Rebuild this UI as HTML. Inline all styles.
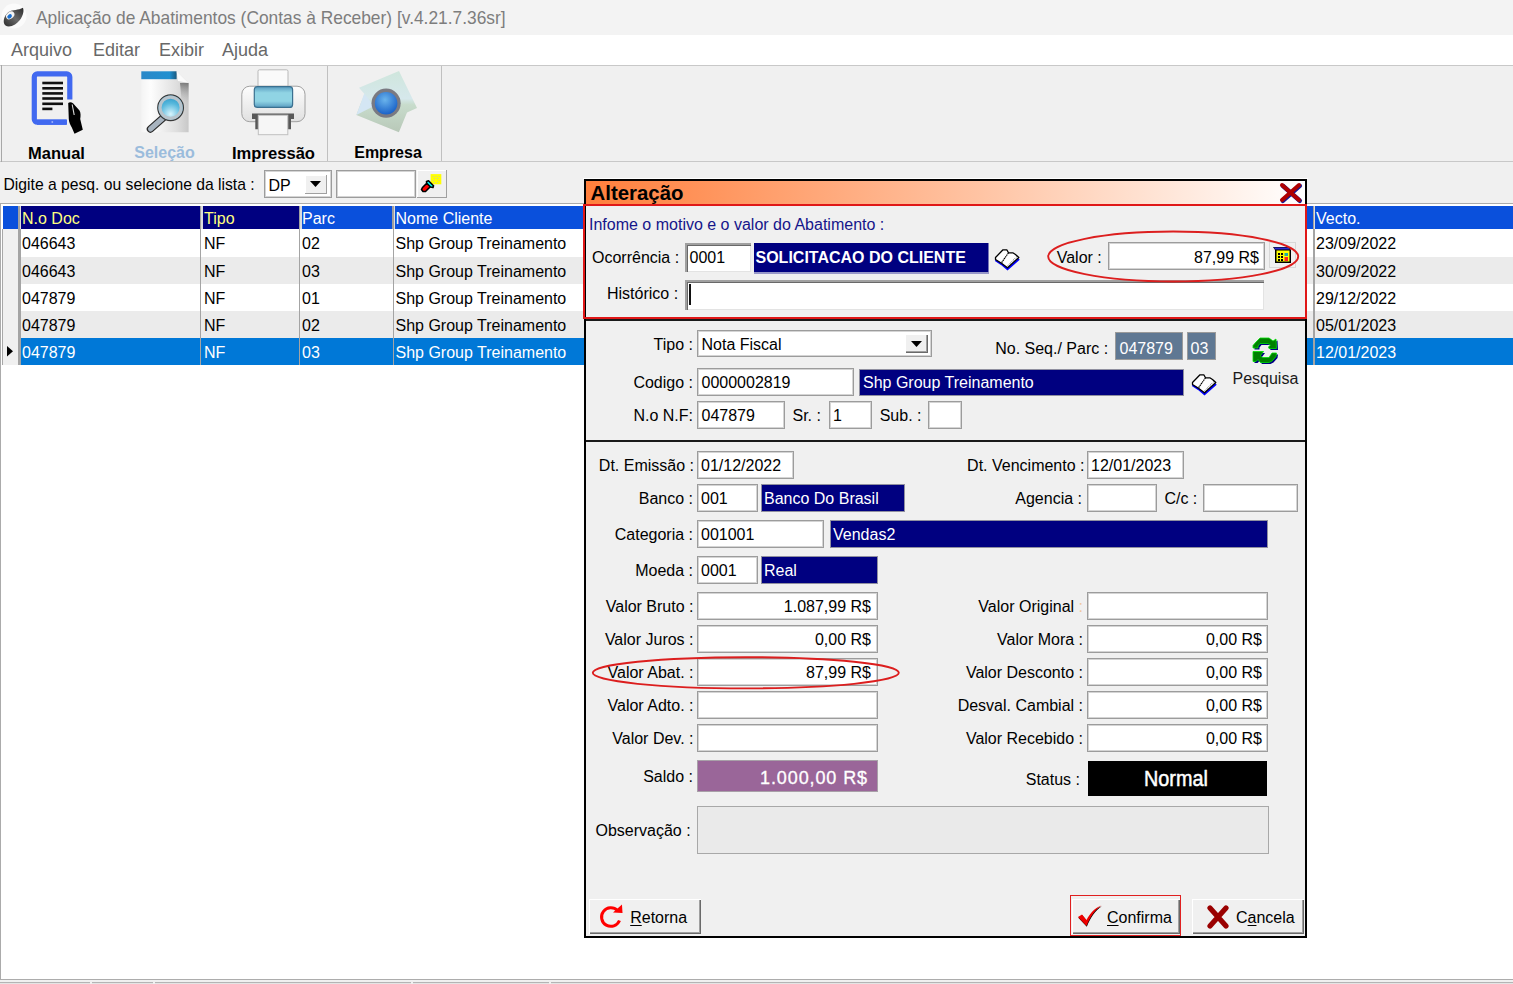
<!DOCTYPE html>
<html><head><meta charset="utf-8">
<style>
html,body{margin:0;padding:0;}
body{width:1513px;height:984px;position:relative;overflow:hidden;background:#f0f0f0;font-family:"Liberation Sans",sans-serif;}
.t{position:absolute;white-space:nowrap;}
.b{position:absolute;box-sizing:border-box;}
svg{position:absolute;overflow:visible;}
</style></head><body>
<div class="b" style="left:0px;top:0px;width:1513px;height:35px;background:#f3f3f3;"></div>
<svg style="left:0;top:0" width="32" height="32" viewBox="0 0 32 32"><defs><linearGradient id="ag" x1="0" y1="1" x2="1" y2="0"><stop offset="0" stop-color="#2a2a2a"/><stop offset="0.5" stop-color="#6a6a6a"/><stop offset="1" stop-color="#2a2a2a"/></linearGradient></defs><circle cx="14" cy="16" r="12.5" fill="#fbfbfb"/><path d="M23 7.8 C24.8 12.5 21.5 20.5 15 24.5 C10 27.5 4.5 27 3.8 22.5 C3.4 18.5 5.5 14.5 8.5 12 C12.5 9.5 18.5 10.5 23 7.8 Z" fill="url(#ag)"/><ellipse cx="10.2" cy="15.3" rx="4.6" ry="3.3" transform="rotate(-38 10.2 15.3)" fill="#f4f4f4"/><ellipse cx="9.6" cy="16.4" rx="2.5" ry="1.9" transform="rotate(-38 9.6 16.4)" fill="#1a6fcf"/></svg>
<div class="t" style="top:7.04px;font-size:18.4px;line-height:21.16px;color:#7d7d7d;font-weight:normal;font-family:&quot;Liberation Sans&quot;,sans-serif;left:36px;transform:scaleX(0.944);transform-origin:0 0;">Aplicação de Abatimentos (Contas à Receber) [v.4.21.7.36sr]</div>
<div class="b" style="left:0px;top:35px;width:1513px;height:30px;background:#ffffff;"></div>
<div class="t" style="top:40.41px;font-size:18px;line-height:20.70px;color:#686868;font-weight:normal;font-family:&quot;Liberation Sans&quot;,sans-serif;left:11px;">Arquivo</div>
<div class="t" style="top:40.41px;font-size:18px;line-height:20.70px;color:#686868;font-weight:normal;font-family:&quot;Liberation Sans&quot;,sans-serif;left:93px;">Editar</div>
<div class="t" style="top:40.41px;font-size:18px;line-height:20.70px;color:#686868;font-weight:normal;font-family:&quot;Liberation Sans&quot;,sans-serif;left:159px;">Exibir</div>
<div class="t" style="top:40.41px;font-size:18px;line-height:20.70px;color:#686868;font-weight:normal;font-family:&quot;Liberation Sans&quot;,sans-serif;left:222px;">Ajuda</div>
<div class="b" style="left:0px;top:65px;width:1513px;height:97px;background:#f0f0f0;border-top:1px solid #c8c8c8;border-bottom:1px solid #c8c8c8;"></div>
<div class="b" style="left:1px;top:65px;width:1px;height:97px;background:#a8a8a8;"></div>
<div class="b" style="left:327px;top:66px;width:1px;height:95px;background:#c0c0c0;"></div>
<div class="b" style="left:441px;top:66px;width:1px;height:95px;background:#c0c0c0;"></div>
<div class="t" style="top:143.80px;font-size:16.5px;line-height:18.97px;color:#000;font-weight:bold;font-family:&quot;Liberation Sans&quot;,sans-serif;left:56.5px;transform:translateX(-50%);">Manual</div>
<div class="t" style="top:144.26px;font-size:16px;line-height:18.40px;color:#9bbcdc;font-weight:bold;font-family:&quot;Liberation Sans&quot;,sans-serif;left:164.5px;transform:translateX(-50%);">Seleção</div>
<div class="t" style="top:143.70px;font-size:16.6px;line-height:19.09px;color:#000;font-weight:bold;font-family:&quot;Liberation Sans&quot;,sans-serif;left:273.5px;transform:translateX(-50%);">Impressão</div>
<div class="t" style="top:144.26px;font-size:16px;line-height:18.40px;color:#000;font-weight:bold;font-family:&quot;Liberation Sans&quot;,sans-serif;left:388px;transform:translateX(-50%);">Empresa</div>
<svg style="left:25px;top:66px" width="70" height="74" viewBox="0 0 70 74"><rect x="9.3" y="7.9" width="35.5" height="48.3" rx="3" fill="none" stroke="#4169f0" stroke-width="5.2"/><rect x="42" y="33.5" width="10" height="26" fill="#f0f0f0"/><rect x="17.3" y="15.7" width="20.7" height="2.6" fill="#111"/><rect x="17.3" y="21" width="20.7" height="2.6" fill="#111"/><rect x="17.3" y="26.1" width="20.7" height="2.6" fill="#111"/><rect x="17.3" y="31.2" width="20.7" height="2.6" fill="#111"/><rect x="17.3" y="36.5" width="20.7" height="2.6" fill="#111"/><rect x="17.3" y="41.6" width="10.1" height="2.6" fill="#111"/><rect x="12" y="53.6" width="29.2" height="5.2" fill="#4169f0"/><rect x="26.5" y="55.2" width="1.6" height="1.6" fill="#a8b8f8"/><path d="M43.2 37 C44.5 35.8 46.5 36 48 37.3 L54.5 44.5 C55.8 46.5 55.8 50 55.2 53 L57.8 63.8 L49.5 67.8 L46.8 61.5 C45 58 44 56.5 43.8 53 Z" fill="#000"/><path d="M47.2 38.5 L49.2 49" stroke="#d8d8d8" stroke-width="1.1"/></svg>
<svg style="left:130px;top:66px" width="70" height="74" viewBox="0 0 70 74"><defs><linearGradient id="dg" x1="0" y1="0" x2="1" y2="0"><stop offset="0" stop-color="#f4f4f4"/><stop offset="0.2" stop-color="#fdfdfd"/><stop offset="0.75" stop-color="#dedede"/><stop offset="1" stop-color="#c8c8c8"/></linearGradient><linearGradient id="sh" x1="0" y1="0" x2="0" y2="1"><stop offset="0" stop-color="#444"/><stop offset="1" stop-color="#d0d0d0" stop-opacity="0"/></linearGradient><linearGradient id="bb" x1="0" y1="0" x2="1" y2="0"><stop offset="0" stop-color="#2a88c8"/><stop offset="0.8" stop-color="#2090d0"/><stop offset="1" stop-color="#1a5a80"/></linearGradient><radialGradient id="lg" cx="0.5" cy="0.75" r="0.7"><stop offset="0" stop-color="#d8f4fc"/><stop offset="0.6" stop-color="#58b8dc"/><stop offset="1" stop-color="#2a98c8"/></radialGradient></defs><path d="M11.3 5.3 L46.6 5.3 L58.6 17 L58.6 66.2 L11.3 66.2 Z" fill="url(#dg)"/><path d="M50 17 L58.6 17 L58.6 40 L52 40 Z" fill="url(#sh)" opacity="0.6"/><rect x="11.3" y="5.3" width="35.3" height="7.9" fill="url(#bb)"/><path d="M46.6 5.3 L58.6 17 L48 15 Z" fill="#fafafa"/><path d="M33 52 L20.5 63" stroke="#2a2a2a" stroke-width="7.5" stroke-linecap="round"/><path d="M33 52 L20.5 63" stroke="#a8b4c0" stroke-width="5" stroke-linecap="round"/><circle cx="40.6" cy="41.7" r="12.8" fill="url(#lg)" stroke="#3a3a3a" stroke-width="1.3"/><circle cx="40.6" cy="41.7" r="10.6" fill="none" stroke="#b8c4cc" stroke-width="3.2"/></svg>
<svg style="left:235px;top:66px" width="75" height="74" viewBox="0 0 75 74"><defs><linearGradient id="pb" x1="0" y1="0" x2="0" y2="1"><stop offset="0" stop-color="#fdfdfd"/><stop offset="1" stop-color="#e0e0e0"/></linearGradient><linearGradient id="pl" x1="0" y1="0" x2="0" y2="1"><stop offset="0" stop-color="#5a9cc0"/><stop offset="0.3" stop-color="#90d4e4"/><stop offset="0.7" stop-color="#90d4e4"/><stop offset="1" stop-color="#5a9cc0"/></linearGradient></defs><rect x="23" y="3.8" width="30" height="17" rx="1.5" fill="#fafafa" stroke="#b8b8b8" stroke-width="1"/><rect x="6.8" y="20.2" width="63.2" height="35.5" rx="8" fill="url(#pb)" stroke="#a0a0a0" stroke-width="1"/><rect x="19.3" y="20.6" width="38.3" height="20.8" rx="3" fill="url(#pl)" stroke="#3a7090" stroke-width="1.2"/><path d="M17 47.4 L59 47.4 L59 53 L56 53 L56 63.2 L20.3 63.2 L20.3 53 L17 53 Z" fill="#585858"/><rect x="23.3" y="49.2" width="29.5" height="19.5" fill="#f6f6f6" stroke="#c0c0c0" stroke-width="1"/></svg>
<svg style="left:350px;top:66px" width="75" height="74" viewBox="0 0 75 74"><defs><linearGradient id="eg" x1="0" y1="0" x2="0" y2="1"><stop offset="0" stop-color="#cfe6dc"/><stop offset="0.45" stop-color="#d6e8ec"/><stop offset="0.55" stop-color="#c8dccc"/><stop offset="1" stop-color="#b8c8b8"/></linearGradient><radialGradient id="bg2" cx="0.45" cy="0.35" r="0.65"><stop offset="0" stop-color="#6ab4ec"/><stop offset="1" stop-color="#1a62c8"/></radialGradient></defs><path d="M9 21.8 L49 4.9 L67 42 L57 46.6 L48.9 66.2 L6.4 48.9 L14.3 27.8 Z" fill="url(#eg)"/><path d="M14.3 27.8 L6.4 48.9 L24 40 Z" fill="#d4e6f4"/><circle cx="36.1" cy="37.2" r="14.6" fill="#7a7a82"/><circle cx="36.1" cy="37.2" r="11.3" fill="url(#bg2)"/></svg>
<div class="t" style="top:176.03px;font-size:15.7px;line-height:18.05px;color:#000;font-weight:normal;font-family:&quot;Liberation Sans&quot;,sans-serif;left:3.5px;">Digite a pesq. ou selecione da lista :</div>
<div class="b" style="left:264px;top:170px;width:68px;height:28px;background:#fff;box-shadow:inset 0 0 0 1px #9c9c9c, inset 0 0 0 2px #d4d4d4;"></div>
<div class="t" style="top:176.76px;font-size:16px;line-height:18.40px;color:#000;font-weight:normal;font-family:&quot;Liberation Sans&quot;,sans-serif;left:268.5px;">DP</div>
<div class="b" style="left:305px;top:175px;width:22px;height:19px;background:#f0f0f0;box-shadow:inset -1px -1px 0 #a0a0a0, inset 1px 1px 0 #fff;"></div>
<svg style="left:310px;top:181px" width="12" height="7"><path d="M0 0 L11 0 L5.5 6 Z" fill="#000"/></svg>
<div class="b" style="left:336px;top:170px;width:80px;height:28px;background:#fff;box-shadow:inset 0 0 0 1px #9c9c9c, inset 0 0 0 2px #d4d4d4;"></div>
<div class="b" style="left:417px;top:170px;width:30px;height:28px;background:#f0f0f0;box-shadow:inset -1px -1px 0 #a0a0a0, inset 1px 1px 0 #fff;"></div>
<svg style="left:414px;top:166px" width="36" height="34" viewBox="0 0 36 34"><rect x="16.6" y="8.1" width="10.7" height="10.2" fill="#ffff00"/><g fill="#c8c8a0"><rect x="18.5" y="10" width="1" height="1"/><rect x="21.5" y="10" width="1" height="1"/><rect x="24.5" y="10" width="1" height="1"/><rect x="20" y="12" width="1" height="1"/><rect x="23" y="12" width="1" height="1"/><rect x="18.5" y="14" width="1" height="1"/><rect x="24.5" y="14" width="1" height="1"/><rect x="20" y="16" width="1" height="1"/><rect x="23" y="16" width="1" height="1"/></g><path d="M7.5 23.5 L9 25.5 L11.5 25.5 L16.5 20.5 L13 17 L8.5 21.5 Z" fill="#ff0000" stroke="#000" stroke-width="1.6" stroke-linejoin="round"/><path d="M12.5 15.5 L14.5 14.8 L19.5 19.8 L19 21.5 L16.5 21 L12.8 17.3 Z" fill="#00ffff" stroke="#000" stroke-width="1.6" stroke-linejoin="round"/></svg>
<div class="b" style="left:0px;top:203px;width:1513px;height:777px;background:#fff;border-top:1px solid #ababab;border-left:1px solid #ababab;"></div>
<div class="b" style="left:3px;top:206px;width:1510px;height:23px;background:#0a50dc;"></div>
<div class="b" style="left:3px;top:206px;width:15px;height:23px;background:#0a50dc;"></div>
<div class="b" style="left:21px;top:206px;width:178.5px;height:23px;background:#000080;"></div>
<div class="b" style="left:201px;top:206px;width:97.60000000000002px;height:23px;background:#000080;"></div>
<div class="b" style="left:18px;top:206px;width:1.5px;height:23px;background:#a0a0a0;"></div>
<div class="b" style="left:19.5px;top:206px;width:1.5px;height:23px;background:#dcdcdc;"></div>
<div class="b" style="left:199.5px;top:206px;width:1.5px;height:23px;background:#a0a0a0;"></div>
<div class="b" style="left:201px;top:206px;width:1.8000000000000114px;height:23px;background:#dcdcdc;"></div>
<div class="b" style="left:298.6px;top:206px;width:1.3999999999999773px;height:23px;background:#a0a0a0;"></div>
<div class="b" style="left:300px;top:206px;width:1.6999999999999886px;height:23px;background:#dcdcdc;"></div>
<div class="b" style="left:392.4px;top:206px;width:1.400000000000034px;height:23px;background:#a0a0a0;"></div>
<div class="b" style="left:393.8px;top:206px;width:1.1999999999999886px;height:23px;background:#dcdcdc;"></div>
<div class="b" style="left:1313px;top:206px;width:1px;height:23px;background:#a0a0a0;"></div>
<div class="b" style="left:1314px;top:206px;width:1px;height:23px;background:#dcdcdc;"></div>
<div class="b" style="left:3px;top:228.6px;width:1510px;height:1.0px;background:#c8c8c8;"></div>
<div class="t" style="top:210.26px;font-size:16px;line-height:18.40px;color:#ffff80;font-weight:normal;font-family:&quot;Liberation Sans&quot;,sans-serif;left:22px;">N.o Doc</div>
<div class="t" style="top:210.26px;font-size:16px;line-height:18.40px;color:#ffff80;font-weight:normal;font-family:&quot;Liberation Sans&quot;,sans-serif;left:204px;">Tipo</div>
<div class="t" style="top:210.26px;font-size:16px;line-height:18.40px;color:#ffffff;font-weight:normal;font-family:&quot;Liberation Sans&quot;,sans-serif;left:302px;">Parc</div>
<div class="t" style="top:210.26px;font-size:16px;line-height:18.40px;color:#ffffff;font-weight:normal;font-family:&quot;Liberation Sans&quot;,sans-serif;left:395.5px;">Nome Cliente</div>
<div class="t" style="top:210.26px;font-size:16px;line-height:18.40px;color:#ffffff;font-weight:normal;font-family:&quot;Liberation Sans&quot;,sans-serif;left:1316px;">Vecto.</div>
<div class="b" style="left:21px;top:229px;width:1492px;height:28px;background:#ffffff;"></div>
<div class="b" style="left:3px;top:229px;width:15px;height:28px;background:#f0f0f0;"></div>
<div class="b" style="left:2px;top:229px;width:1px;height:28px;background:#a8a8a8;"></div>
<div class="t" style="top:235.26px;font-size:16px;line-height:18.40px;color:#000;font-weight:normal;font-family:&quot;Liberation Sans&quot;,sans-serif;left:22px;">046643</div>
<div class="t" style="top:235.26px;font-size:16px;line-height:18.40px;color:#000;font-weight:normal;font-family:&quot;Liberation Sans&quot;,sans-serif;left:204px;">NF</div>
<div class="t" style="top:235.26px;font-size:16px;line-height:18.40px;color:#000;font-weight:normal;font-family:&quot;Liberation Sans&quot;,sans-serif;left:302px;">02</div>
<div class="t" style="top:235.26px;font-size:16px;line-height:18.40px;color:#000;font-weight:normal;font-family:&quot;Liberation Sans&quot;,sans-serif;left:395.5px;">Shp Group Treinamento</div>
<div class="t" style="top:235.26px;font-size:16px;line-height:18.40px;color:#000;font-weight:normal;font-family:&quot;Liberation Sans&quot;,sans-serif;left:1316px;">23/09/2022</div>
<div class="b" style="left:21px;top:257px;width:1492px;height:27px;background:#ebebeb;"></div>
<div class="b" style="left:3px;top:257px;width:15px;height:27px;background:#f0f0f0;"></div>
<div class="b" style="left:2px;top:257px;width:1px;height:27px;background:#a8a8a8;"></div>
<div class="t" style="top:263.26px;font-size:16px;line-height:18.40px;color:#000;font-weight:normal;font-family:&quot;Liberation Sans&quot;,sans-serif;left:22px;">046643</div>
<div class="t" style="top:263.26px;font-size:16px;line-height:18.40px;color:#000;font-weight:normal;font-family:&quot;Liberation Sans&quot;,sans-serif;left:204px;">NF</div>
<div class="t" style="top:263.26px;font-size:16px;line-height:18.40px;color:#000;font-weight:normal;font-family:&quot;Liberation Sans&quot;,sans-serif;left:302px;">03</div>
<div class="t" style="top:263.26px;font-size:16px;line-height:18.40px;color:#000;font-weight:normal;font-family:&quot;Liberation Sans&quot;,sans-serif;left:395.5px;">Shp Group Treinamento</div>
<div class="t" style="top:263.26px;font-size:16px;line-height:18.40px;color:#000;font-weight:normal;font-family:&quot;Liberation Sans&quot;,sans-serif;left:1316px;">30/09/2022</div>
<div class="b" style="left:21px;top:284px;width:1492px;height:27px;background:#ffffff;"></div>
<div class="b" style="left:3px;top:284px;width:15px;height:27px;background:#f0f0f0;"></div>
<div class="b" style="left:2px;top:284px;width:1px;height:27px;background:#a8a8a8;"></div>
<div class="t" style="top:290.26px;font-size:16px;line-height:18.40px;color:#000;font-weight:normal;font-family:&quot;Liberation Sans&quot;,sans-serif;left:22px;">047879</div>
<div class="t" style="top:290.26px;font-size:16px;line-height:18.40px;color:#000;font-weight:normal;font-family:&quot;Liberation Sans&quot;,sans-serif;left:204px;">NF</div>
<div class="t" style="top:290.26px;font-size:16px;line-height:18.40px;color:#000;font-weight:normal;font-family:&quot;Liberation Sans&quot;,sans-serif;left:302px;">01</div>
<div class="t" style="top:290.26px;font-size:16px;line-height:18.40px;color:#000;font-weight:normal;font-family:&quot;Liberation Sans&quot;,sans-serif;left:395.5px;">Shp Group Treinamento</div>
<div class="t" style="top:290.26px;font-size:16px;line-height:18.40px;color:#000;font-weight:normal;font-family:&quot;Liberation Sans&quot;,sans-serif;left:1316px;">29/12/2022</div>
<div class="b" style="left:21px;top:311px;width:1492px;height:27px;background:#ebebeb;"></div>
<div class="b" style="left:3px;top:311px;width:15px;height:27px;background:#f0f0f0;"></div>
<div class="b" style="left:2px;top:311px;width:1px;height:27px;background:#a8a8a8;"></div>
<div class="t" style="top:317.26px;font-size:16px;line-height:18.40px;color:#000;font-weight:normal;font-family:&quot;Liberation Sans&quot;,sans-serif;left:22px;">047879</div>
<div class="t" style="top:317.26px;font-size:16px;line-height:18.40px;color:#000;font-weight:normal;font-family:&quot;Liberation Sans&quot;,sans-serif;left:204px;">NF</div>
<div class="t" style="top:317.26px;font-size:16px;line-height:18.40px;color:#000;font-weight:normal;font-family:&quot;Liberation Sans&quot;,sans-serif;left:302px;">02</div>
<div class="t" style="top:317.26px;font-size:16px;line-height:18.40px;color:#000;font-weight:normal;font-family:&quot;Liberation Sans&quot;,sans-serif;left:395.5px;">Shp Group Treinamento</div>
<div class="t" style="top:317.26px;font-size:16px;line-height:18.40px;color:#000;font-weight:normal;font-family:&quot;Liberation Sans&quot;,sans-serif;left:1316px;">05/01/2023</div>
<div class="b" style="left:21px;top:338px;width:1492px;height:27px;background:#0078d7;"></div>
<div class="b" style="left:3px;top:338px;width:15px;height:27px;background:#f0f0f0;"></div>
<div class="b" style="left:2px;top:338px;width:1px;height:27px;background:#a8a8a8;"></div>
<div class="t" style="top:344.26px;font-size:16px;line-height:18.40px;color:#fff;font-weight:normal;font-family:&quot;Liberation Sans&quot;,sans-serif;left:22px;">047879</div>
<div class="t" style="top:344.26px;font-size:16px;line-height:18.40px;color:#fff;font-weight:normal;font-family:&quot;Liberation Sans&quot;,sans-serif;left:204px;">NF</div>
<div class="t" style="top:344.26px;font-size:16px;line-height:18.40px;color:#fff;font-weight:normal;font-family:&quot;Liberation Sans&quot;,sans-serif;left:302px;">03</div>
<div class="t" style="top:344.26px;font-size:16px;line-height:18.40px;color:#fff;font-weight:normal;font-family:&quot;Liberation Sans&quot;,sans-serif;left:395.5px;">Shp Group Treinamento</div>
<div class="t" style="top:344.26px;font-size:16px;line-height:18.40px;color:#fff;font-weight:normal;font-family:&quot;Liberation Sans&quot;,sans-serif;left:1316px;">12/01/2023</div>
<div class="b" style="left:18.3px;top:229px;width:2.5px;height:136px;background:#a4a4a4;"></div>
<div class="b" style="left:199.5px;top:229px;width:1.5999999999999943px;height:136px;background:#a4a4a4;"></div>
<div class="b" style="left:298.8px;top:229px;width:1.6000000000000227px;height:136px;background:#a4a4a4;"></div>
<div class="b" style="left:392.6px;top:229px;width:1.6000000000000227px;height:136px;background:#a4a4a4;"></div>
<div class="b" style="left:1313.3px;top:229px;width:1.599999999999909px;height:136px;background:#a4a4a4;"></div>
<svg style="left:7px;top:346px" width="7" height="11"><path d="M0 0 L6 5.2 L0 10.5 Z" fill="#000"/></svg>
<div class="b" style="left:0px;top:979px;width:1513px;height:1px;background:#acacac;"></div>
<div class="b" style="left:0px;top:980px;width:1513px;height:4px;background:#f0f0f0;"></div>
<div class="b" style="left:0px;top:982px;width:1513px;height:1px;background:#b4b4b4;"></div>
<div class="b" style="left:0px;top:983px;width:1513px;height:1px;background:#e4e4e4;"></div>
<div class="b" style="left:90px;top:982px;width:2px;height:2px;background:#f0f0f0;"></div>
<div class="b" style="left:153px;top:982px;width:2px;height:2px;background:#f0f0f0;"></div>
<div class="b" style="left:411px;top:982px;width:2px;height:2px;background:#f0f0f0;"></div>
<div class="b" style="left:549px;top:982px;width:2px;height:2px;background:#f0f0f0;"></div>
<div class="b" style="left:583px;top:178px;width:725px;height:1px;background:#ffffff;"></div>
<div class="b" style="left:584px;top:179px;width:723px;height:759px;background:#f0f0f0;border:2px solid #000;"></div>
<div class="b" style="left:586px;top:181px;width:719px;height:23px;background:linear-gradient(to right,#ff7f3c 0%,#ffc4a4 55%,#ffffff 100%);"></div>
<div class="t" style="top:182.00px;font-size:20.4px;line-height:23.46px;color:#000;font-weight:bold;font-family:&quot;Liberation Sans&quot;,sans-serif;left:590.5px;">Alteração</div>
<svg style="left:1279px;top:183px" width="23" height="19" viewBox="0 0 23 19"><path d="M3 2 L20 17 M20 2 L3 17" stroke="#1a1a90" stroke-width="4.5" stroke-linecap="round" transform="translate(0.8,0.8)"/><path d="M3 2 L20 17 M20 2 L3 17" stroke="#b00000" stroke-width="4" stroke-linecap="round"/></svg>
<div class="b" style="left:586px;top:319px;width:719px;height:2px;background:#1a1a1a;"></div>
<div class="b" style="left:586px;top:439.5px;width:719px;height:2.0px;background:#1a1a1a;"></div>
<div class="b" style="left:583px;top:203.5px;width:723.5px;height:115.0px;border:2px solid #e01818;"></div>
<div class="t" style="top:216.06px;font-size:16px;line-height:18.40px;color:#15158a;font-weight:normal;font-family:&quot;Liberation Sans&quot;,sans-serif;left:589px;">Infome o motivo e o valor do Abatimento :</div>
<div class="t" style="top:248.66px;font-size:16px;line-height:18.40px;color:#000;font-weight:normal;font-family:&quot;Liberation Sans&quot;,sans-serif;left:592px;">Ocorrência :</div>
<div class="b" style="left:684.5px;top:242.5px;width:66.0px;height:29.0px;background:#fff;box-shadow:inset 2px 2px 0 #a0a0a0, inset 3px 3px 0 #696969, inset -1px -1px 0 #e3e3e3;"></div>
<div class="t" style="top:248.66px;font-size:16px;line-height:18.40px;color:#000;font-weight:normal;font-family:&quot;Liberation Sans&quot;,sans-serif;left:689.5px;">0001</div>
<div class="b" style="left:754px;top:242.5px;width:235px;height:29.5px;background:#000080;box-shadow:inset -1px 0 0 #7878b8;"></div>
<div class="b" style="left:754px;top:272px;width:235px;height:1.5px;background:#9898c8;"></div>
<div class="t" style="top:248.66px;font-size:16px;line-height:18.40px;color:#fff;font-weight:bold;font-family:&quot;Liberation Sans&quot;,sans-serif;left:755.5px;">SOLICITACAO DO CLIENTE</div>
<svg style="left:990px;top:244px" width="34" height="30" viewBox="0 0 34 30"><path d="M5.5 16 L11.5 20 L17.5 25 L29 15" fill="none" stroke="#0000ff" stroke-width="2.2"/><path d="M5.5 13.5 L13 5.8 L16.8 5.8 L18.5 8.8 L22.8 8.8 L25.5 10.5 L28.8 13.5 L17.5 23.8 L11.5 19.3 L5.5 15.5 Z" fill="#fff" stroke="#000" stroke-width="1.3" stroke-linejoin="round"/><path d="M18.5 8.8 L11.5 18.8" stroke="#000" stroke-width="1.2" stroke-dasharray="1.5 0.6"/><path d="M26.8 12.5 L17.8 21.5" stroke="#555" stroke-width="1" stroke-dasharray="1 1"/></svg>
<svg style="left:0;top:0" width="1" height="1"></svg>
<div class="t" style="top:248.66px;font-size:16px;line-height:18.40px;color:#000;font-weight:normal;font-family:&quot;Liberation Sans&quot;,sans-serif;left:1056.7px;">Valor :</div>
<div class="b" style="left:1107.5px;top:242px;width:157.0px;height:27.5px;background:#fff;box-shadow:inset 0 0 0 1px #9c9c9c, inset 0 0 0 2px #d4d4d4;"></div>
<div class="t" style="top:248.66px;font-size:16px;line-height:18.40px;color:#000;font-weight:normal;font-family:&quot;Liberation Sans&quot;,sans-serif;right:254px;">87,99 R$</div>
<div class="b" style="left:1269px;top:242px;width:27px;height:26px;background:#f0f0f0;box-shadow:inset 0 0 0 1px #d8d8d8;"></div>
<svg style="left:1272px;top:246px" width="20" height="18" viewBox="0 0 20 18"><path d="M1 1 L17 1 L19 4 L19 17 L3 17 L3 4 Z" fill="#000"/><rect x="4.5" y="4.5" width="13" height="11" fill="#ffff00"/><path d="M1.5 1.5 L16.5 1.5 L18 3.5 L3.5 3.5 Z" fill="#2a2ad0"/><rect x="6" y="7" width="2" height="2" fill="#000"/><rect x="9" y="7" width="2" height="2" fill="#000"/><rect x="6" y="10" width="2" height="2" fill="#000"/><rect x="9" y="10" width="2" height="2" fill="#000"/><rect x="6" y="13" width="2" height="2" fill="#000"/><rect x="9" y="13" width="2" height="2" fill="#000"/><rect x="12.5" y="7" width="3.5" height="3" fill="#20b0a0"/><rect x="12.5" y="11" width="3.5" height="4" fill="#ff2020"/></svg>
<div class="t" style="top:284.96px;font-size:16px;line-height:18.40px;color:#000;font-weight:normal;font-family:&quot;Liberation Sans&quot;,sans-serif;left:607px;">Histórico :</div>
<div class="b" style="left:684.5px;top:279.5px;width:579.5px;height:30.0px;background:#fff;box-shadow:inset 2px 2px 0 #a0a0a0, inset 3px 3px 0 #696969, inset -1px -1px 0 #e3e3e3;"></div>
<div class="b" style="left:689px;top:284px;width:1.5px;height:21px;background:#111;"></div>
<svg style="left:0;top:0" width="1513" height="984"><ellipse cx="1173.2" cy="256.5" rx="125" ry="25" fill="none" stroke="#dc1e1e" stroke-width="1.9"/></svg>
<div class="t" style="top:335.96px;font-size:16px;line-height:18.40px;color:#000;font-weight:normal;font-family:&quot;Liberation Sans&quot;,sans-serif;right:820px;">Tipo :</div>
<div class="b" style="left:696.5px;top:329.5px;width:235.0px;height:27.5px;background:#fff;box-shadow:inset 0 0 0 1px #9c9c9c, inset 0 0 0 2px #d4d4d4;"></div>
<div class="t" style="top:335.96px;font-size:16px;line-height:18.40px;color:#000;font-weight:normal;font-family:&quot;Liberation Sans&quot;,sans-serif;left:701.5px;">Nota Fiscal</div>
<div class="b" style="left:905px;top:333.5px;width:22.5px;height:19.5px;background:#f0f0f0;box-shadow:inset 1px 1px 0 #fff, inset -1px -1px 0 #6a6a6a, inset -2px -2px 0 #a0a0a0;"></div>
<svg style="left:911px;top:341px" width="12" height="7"><path d="M0 0 L11 0 L5.5 6 Z" fill="#000"/></svg>
<div class="t" style="top:339.56px;font-size:16px;line-height:18.40px;color:#000;font-weight:normal;font-family:&quot;Liberation Sans&quot;,sans-serif;left:995.2px;">No. Seq./ Parc :</div>
<div class="b" style="left:1115px;top:332px;width:67.5px;height:28px;background:#5f7893;box-shadow:inset 0 0 0 1px #9a9a9a;"></div>
<div class="t" style="top:339.56px;font-size:16px;line-height:18.40px;color:#fff;font-weight:normal;font-family:&quot;Liberation Sans&quot;,sans-serif;left:1119.5px;">047879</div>
<div class="b" style="left:1187px;top:332px;width:28.5px;height:28px;background:#5f7893;box-shadow:inset 0 0 0 1px #9a9a9a;"></div>
<div class="t" style="top:339.56px;font-size:16px;line-height:18.40px;color:#fff;font-weight:normal;font-family:&quot;Liberation Sans&quot;,sans-serif;left:1190.5px;">03</div>
<svg style="left:1248px;top:334px" width="36" height="34" viewBox="0 0 36 34"><g transform="translate(1.5,1.5)" fill="#000080"><path d="M5 14 L5 11.5 L8 8 L12 4 L21 4 L25 7 L28 5 L28.5 14.5 L21 14.5 L20.5 13 L22.5 11 L20 9.5 L12 9.5 L10 12 L10 14 Z"/><path d="M5 17.5 L15.5 17.5 L12.5 21.5 L14 23.5 L21 23.5 L24 19 L28.5 19 L28 22.5 L24 27 L21 28.5 L12.5 28.5 L10 25.5 L8 27.5 L5 27.5 Z"/></g><g fill="#008000" stroke="#00e000" stroke-width="0.8"><path d="M5 14 L5 11.5 L8 8 L12 4 L21 4 L25 7 L28 5 L28.5 14.5 L21 14.5 L20.5 13 L22.5 11 L20 9.5 L12 9.5 L10 12 L10 14 Z"/><path d="M5 17.5 L15.5 17.5 L12.5 21.5 L14 23.5 L21 23.5 L24 19 L28.5 19 L28 22.5 L24 27 L21 28.5 L12.5 28.5 L10 25.5 L8 27.5 L5 27.5 Z"/></g></svg>
<div class="t" style="top:370.26px;font-size:16px;line-height:18.40px;color:#1a1a1a;font-weight:normal;font-family:&quot;Liberation Sans&quot;,sans-serif;left:1232.5px;">Pesquisa</div>
<div class="t" style="top:374.26px;font-size:16px;line-height:18.40px;color:#000;font-weight:normal;font-family:&quot;Liberation Sans&quot;,sans-serif;right:820px;">Codigo :</div>
<div class="b" style="left:696.5px;top:368px;width:157.0px;height:28px;background:#fff;box-shadow:inset 0 0 0 1px #9c9c9c, inset 0 0 0 2px #d4d4d4;"></div>
<div class="t" style="top:374.26px;font-size:16px;line-height:18.40px;color:#000;font-weight:normal;font-family:&quot;Liberation Sans&quot;,sans-serif;left:701.5px;">0000002819</div>
<div class="b" style="left:858.5px;top:368.5px;width:325.0px;height:27.0px;background:#000080;box-shadow:inset 0 0 0 1px #9090a0;"></div>
<div class="t" style="top:374.26px;font-size:16px;line-height:18.40px;color:#fff;font-weight:normal;font-family:&quot;Liberation Sans&quot;,sans-serif;left:863px;">Shp Group Treinamento</div>
<svg style="left:1187px;top:369px" width="34" height="30" viewBox="0 0 34 30"><path d="M5.5 16 L11.5 20 L17.5 25 L29 15" fill="none" stroke="#0000ff" stroke-width="2.2"/><path d="M5.5 13.5 L13 5.8 L16.8 5.8 L18.5 8.8 L22.8 8.8 L25.5 10.5 L28.8 13.5 L17.5 23.8 L11.5 19.3 L5.5 15.5 Z" fill="#fff" stroke="#000" stroke-width="1.3" stroke-linejoin="round"/><path d="M18.5 8.8 L11.5 18.8" stroke="#000" stroke-width="1.2" stroke-dasharray="1.5 0.6"/><path d="M26.8 12.5 L17.8 21.5" stroke="#555" stroke-width="1" stroke-dasharray="1 1"/></svg>
<div class="t" style="top:407.26px;font-size:16px;line-height:18.40px;color:#000;font-weight:normal;font-family:&quot;Liberation Sans&quot;,sans-serif;right:820px;">N.o N.F:</div>
<div class="b" style="left:696.5px;top:401px;width:88.0px;height:28px;background:#fff;box-shadow:inset 0 0 0 1px #9c9c9c, inset 0 0 0 2px #d4d4d4;"></div>
<div class="t" style="top:407.26px;font-size:16px;line-height:18.40px;color:#000;font-weight:normal;font-family:&quot;Liberation Sans&quot;,sans-serif;left:701.5px;">047879</div>
<div class="t" style="top:407.26px;font-size:16px;line-height:18.40px;color:#000;font-weight:normal;font-family:&quot;Liberation Sans&quot;,sans-serif;left:792.5px;">Sr. :</div>
<div class="b" style="left:829px;top:401px;width:42.5px;height:28px;background:#fff;box-shadow:inset 0 0 0 1px #9c9c9c, inset 0 0 0 2px #d4d4d4;"></div>
<div class="t" style="top:407.26px;font-size:16px;line-height:18.40px;color:#000;font-weight:normal;font-family:&quot;Liberation Sans&quot;,sans-serif;left:833px;">1</div>
<div class="t" style="top:407.26px;font-size:16px;line-height:18.40px;color:#000;font-weight:normal;font-family:&quot;Liberation Sans&quot;,sans-serif;left:879.7px;">Sub. :</div>
<div class="b" style="left:927.5px;top:401px;width:34.0px;height:28px;background:#fff;box-shadow:inset 0 0 0 1px #9c9c9c, inset 0 0 0 2px #d4d4d4;"></div>
<div class="t" style="top:457.26px;font-size:16px;line-height:18.40px;color:#000;font-weight:normal;font-family:&quot;Liberation Sans&quot;,sans-serif;right:819px;">Dt. Emissão :</div>
<div class="b" style="left:696.5px;top:450.5px;width:97.5px;height:28.5px;background:#fff;box-shadow:inset 0 0 0 1px #9c9c9c, inset 0 0 0 2px #d4d4d4;"></div>
<div class="t" style="top:457.26px;font-size:16px;line-height:18.40px;color:#000;font-weight:normal;font-family:&quot;Liberation Sans&quot;,sans-serif;left:701px;">01/12/2022</div>
<div class="t" style="top:457.26px;font-size:16px;line-height:18.40px;color:#000;font-weight:normal;font-family:&quot;Liberation Sans&quot;,sans-serif;right:428.5px;">Dt. Vencimento :</div>
<div class="b" style="left:1087px;top:451px;width:97px;height:27.5px;background:#fff;box-shadow:inset 0 0 0 1px #9c9c9c, inset 0 0 0 2px #d4d4d4;"></div>
<div class="t" style="top:457.26px;font-size:16px;line-height:18.40px;color:#000;font-weight:normal;font-family:&quot;Liberation Sans&quot;,sans-serif;left:1091px;">12/01/2023</div>
<div class="t" style="top:490.26px;font-size:16px;line-height:18.40px;color:#000;font-weight:normal;font-family:&quot;Liberation Sans&quot;,sans-serif;right:820px;">Banco :</div>
<div class="b" style="left:696.5px;top:484px;width:61.0px;height:27.5px;background:#fff;box-shadow:inset 0 0 0 1px #9c9c9c, inset 0 0 0 2px #d4d4d4;"></div>
<div class="t" style="top:490.26px;font-size:16px;line-height:18.40px;color:#000;font-weight:normal;font-family:&quot;Liberation Sans&quot;,sans-serif;left:701px;">001</div>
<div class="b" style="left:760.5px;top:484px;width:144.0px;height:27.5px;background:#000080;box-shadow:inset 0 0 0 1px #9090a0;"></div>
<div class="t" style="top:490.26px;font-size:16px;line-height:18.40px;color:#fff;font-weight:normal;font-family:&quot;Liberation Sans&quot;,sans-serif;left:764px;">Banco Do Brasil</div>
<div class="t" style="top:490.26px;font-size:16px;line-height:18.40px;color:#000;font-weight:normal;font-family:&quot;Liberation Sans&quot;,sans-serif;right:431px;">Agencia :</div>
<div class="b" style="left:1087px;top:484px;width:70px;height:27.5px;background:#fff;box-shadow:inset 0 0 0 1px #9c9c9c, inset 0 0 0 2px #d4d4d4;"></div>
<div class="t" style="top:490.26px;font-size:16px;line-height:18.40px;color:#000;font-weight:normal;font-family:&quot;Liberation Sans&quot;,sans-serif;left:1164.4px;">C/c :</div>
<div class="b" style="left:1203px;top:484px;width:94.5px;height:27.5px;background:#fff;box-shadow:inset 0 0 0 1px #9c9c9c, inset 0 0 0 2px #d4d4d4;"></div>
<div class="t" style="top:526.26px;font-size:16px;line-height:18.40px;color:#000;font-weight:normal;font-family:&quot;Liberation Sans&quot;,sans-serif;right:820px;">Categoria :</div>
<div class="b" style="left:696.5px;top:520px;width:127.0px;height:27.5px;background:#fff;box-shadow:inset 0 0 0 1px #9c9c9c, inset 0 0 0 2px #d4d4d4;"></div>
<div class="t" style="top:526.26px;font-size:16px;line-height:18.40px;color:#000;font-weight:normal;font-family:&quot;Liberation Sans&quot;,sans-serif;left:701px;">001001</div>
<div class="b" style="left:829.5px;top:520px;width:438.5px;height:27.5px;background:#000080;box-shadow:inset 0 0 0 1px #9090a0;"></div>
<div class="t" style="top:526.26px;font-size:16px;line-height:18.40px;color:#fff;font-weight:normal;font-family:&quot;Liberation Sans&quot;,sans-serif;left:833px;">Vendas2</div>
<div class="t" style="top:562.26px;font-size:16px;line-height:18.40px;color:#000;font-weight:normal;font-family:&quot;Liberation Sans&quot;,sans-serif;right:820px;">Moeda :</div>
<div class="b" style="left:696.5px;top:556px;width:61.0px;height:27.5px;background:#fff;box-shadow:inset 0 0 0 1px #9c9c9c, inset 0 0 0 2px #d4d4d4;"></div>
<div class="t" style="top:562.26px;font-size:16px;line-height:18.40px;color:#000;font-weight:normal;font-family:&quot;Liberation Sans&quot;,sans-serif;left:701px;">0001</div>
<div class="b" style="left:760.5px;top:556px;width:117.0px;height:27.5px;background:#000080;box-shadow:inset 0 0 0 1px #9090a0;"></div>
<div class="t" style="top:562.26px;font-size:16px;line-height:18.40px;color:#fff;font-weight:normal;font-family:&quot;Liberation Sans&quot;,sans-serif;left:764px;">Real</div>
<div class="t" style="top:598.26px;font-size:16px;line-height:18.40px;color:#000;font-weight:normal;font-family:&quot;Liberation Sans&quot;,sans-serif;right:819.5px;">Valor Bruto :</div>
<div class="b" style="left:696.5px;top:592px;width:181.0px;height:28px;background:#fff;box-shadow:inset 0 0 0 1px #9c9c9c, inset 0 0 0 2px #d4d4d4;"></div>
<div class="t" style="top:598.26px;font-size:16px;line-height:18.40px;color:#000;font-weight:normal;font-family:&quot;Liberation Sans&quot;,sans-serif;right:642px;">1.087,99 R$</div>
<div class="t" style="top:598.26px;font-size:16px;line-height:18.40px;color:#000;font-weight:normal;font-family:&quot;Liberation Sans&quot;,sans-serif;right:430px;">Valor Original <span style="color:#f0c8a0">:</span></div>
<div class="b" style="left:1087px;top:592px;width:181px;height:28px;background:#fff;box-shadow:inset 0 0 0 1px #9c9c9c, inset 0 0 0 2px #d4d4d4;"></div>
<div class="t" style="top:631.26px;font-size:16px;line-height:18.40px;color:#000;font-weight:normal;font-family:&quot;Liberation Sans&quot;,sans-serif;right:819.5px;">Valor Juros :</div>
<div class="b" style="left:696.5px;top:625px;width:181.0px;height:27.5px;background:#fff;box-shadow:inset 0 0 0 1px #9c9c9c, inset 0 0 0 2px #d4d4d4;"></div>
<div class="t" style="top:631.26px;font-size:16px;line-height:18.40px;color:#000;font-weight:normal;font-family:&quot;Liberation Sans&quot;,sans-serif;right:642px;">0,00 R$</div>
<div class="t" style="top:631.26px;font-size:16px;line-height:18.40px;color:#000;font-weight:normal;font-family:&quot;Liberation Sans&quot;,sans-serif;right:430px;">Valor Mora :</div>
<div class="b" style="left:1087px;top:625px;width:181px;height:27.5px;background:#fff;box-shadow:inset 0 0 0 1px #9c9c9c, inset 0 0 0 2px #d4d4d4;"></div>
<div class="t" style="top:631.26px;font-size:16px;line-height:18.40px;color:#000;font-weight:normal;font-family:&quot;Liberation Sans&quot;,sans-serif;right:251px;">0,00 R$</div>
<div class="t" style="top:664.26px;font-size:16px;line-height:18.40px;color:#000;font-weight:normal;font-family:&quot;Liberation Sans&quot;,sans-serif;right:819.5px;">Valor Abat. :</div>
<div class="b" style="left:696.5px;top:658px;width:181.0px;height:27.5px;background:#fff;box-shadow:inset 0 0 0 1px #9c9c9c, inset 0 0 0 2px #d4d4d4;"></div>
<div class="t" style="top:664.26px;font-size:16px;line-height:18.40px;color:#000;font-weight:normal;font-family:&quot;Liberation Sans&quot;,sans-serif;right:642px;">87,99 R$</div>
<div class="t" style="top:664.26px;font-size:16px;line-height:18.40px;color:#000;font-weight:normal;font-family:&quot;Liberation Sans&quot;,sans-serif;right:430px;">Valor Desconto :</div>
<div class="b" style="left:1087px;top:658px;width:181px;height:27.5px;background:#fff;box-shadow:inset 0 0 0 1px #9c9c9c, inset 0 0 0 2px #d4d4d4;"></div>
<div class="t" style="top:664.26px;font-size:16px;line-height:18.40px;color:#000;font-weight:normal;font-family:&quot;Liberation Sans&quot;,sans-serif;right:251px;">0,00 R$</div>
<div class="t" style="top:697.26px;font-size:16px;line-height:18.40px;color:#000;font-weight:normal;font-family:&quot;Liberation Sans&quot;,sans-serif;right:819.5px;">Valor Adto. :</div>
<div class="b" style="left:696.5px;top:691px;width:181.0px;height:27.5px;background:#fff;box-shadow:inset 0 0 0 1px #9c9c9c, inset 0 0 0 2px #d4d4d4;"></div>
<div class="t" style="top:697.26px;font-size:16px;line-height:18.40px;color:#000;font-weight:normal;font-family:&quot;Liberation Sans&quot;,sans-serif;right:430px;">Desval. Cambial :</div>
<div class="b" style="left:1087px;top:691px;width:181px;height:27.5px;background:#fff;box-shadow:inset 0 0 0 1px #9c9c9c, inset 0 0 0 2px #d4d4d4;"></div>
<div class="t" style="top:697.26px;font-size:16px;line-height:18.40px;color:#000;font-weight:normal;font-family:&quot;Liberation Sans&quot;,sans-serif;right:251px;">0,00 R$</div>
<div class="t" style="top:730.26px;font-size:16px;line-height:18.40px;color:#000;font-weight:normal;font-family:&quot;Liberation Sans&quot;,sans-serif;right:819.5px;">Valor Dev. :</div>
<div class="b" style="left:696.5px;top:724px;width:181.0px;height:27.5px;background:#fff;box-shadow:inset 0 0 0 1px #9c9c9c, inset 0 0 0 2px #d4d4d4;"></div>
<div class="t" style="top:730.26px;font-size:16px;line-height:18.40px;color:#000;font-weight:normal;font-family:&quot;Liberation Sans&quot;,sans-serif;right:430px;">Valor Recebido :</div>
<div class="b" style="left:1087px;top:724px;width:181px;height:27.5px;background:#fff;box-shadow:inset 0 0 0 1px #9c9c9c, inset 0 0 0 2px #d4d4d4;"></div>
<div class="t" style="top:730.26px;font-size:16px;line-height:18.40px;color:#000;font-weight:normal;font-family:&quot;Liberation Sans&quot;,sans-serif;right:251px;">0,00 R$</div>
<div class="t" style="top:768.26px;font-size:16px;line-height:18.40px;color:#000;font-weight:normal;font-family:&quot;Liberation Sans&quot;,sans-serif;right:820px;">Saldo :</div>
<div class="b" style="left:696.5px;top:760px;width:181.0px;height:31.5px;background:#9a6699;box-shadow:inset 0 0 0 1px #a8a0a8;"></div>
<div class="t" style="top:767.91px;font-size:18px;line-height:20.70px;color:#fff;font-weight:normal;font-family:&quot;Liberation Sans&quot;,sans-serif;right:645px;letter-spacing:0.9px;-webkit-text-stroke:0.3px #fff;">1.000,00 R$</div>
<div class="t" style="top:771.26px;font-size:16px;line-height:18.40px;color:#000;font-weight:normal;font-family:&quot;Liberation Sans&quot;,sans-serif;right:433px;">Status :</div>
<div class="b" style="left:1087.5px;top:760.5px;width:179.0px;height:35.0px;background:#000;"></div>
<div class="t" style="top:765.73px;font-size:22px;line-height:25.30px;color:#fff;font-weight:normal;font-family:&quot;Liberation Sans&quot;,sans-serif;left:1144px;transform:scaleX(0.9);transform-origin:0 0;-webkit-text-stroke:0.5px #fff;">Normal</div>
<svg style="left:0;top:0" width="1513" height="984"><ellipse cx="745.8" cy="672.8" rx="153" ry="15.6" fill="none" stroke="#dc1e1e" stroke-width="1.9"/></svg>
<div class="t" style="top:822.26px;font-size:16px;line-height:18.40px;color:#000;font-weight:normal;font-family:&quot;Liberation Sans&quot;,sans-serif;right:822.4px;">Observação :</div>
<div class="b" style="left:696.5px;top:806px;width:572.5px;height:47.5px;background:#eaeaea;box-shadow:inset 0 0 0 1px #a8a8a8;"></div>
<div class="b" style="left:589px;top:899px;width:112px;height:34.5px;background:#f0f0f0;box-shadow:inset 1px 1px 0 #fff, inset -1px -1px 0 #6a6a6a, inset -2px -2px 0 #a0a0a0;"></div>
<svg style="left:599px;top:904px" width="26" height="25" viewBox="0 0 26 25"><path d="M20.5 16.5 A9.3 9.3 0 1 1 18.5 6.5" fill="none" stroke="#ff0000" stroke-width="3"/><path d="M14 8.5 L23.5 9 L23 0.5 Z" fill="#ff0000"/></svg>
<div class="t" style="top:908.76px;font-size:16px;line-height:18.40px;color:#000;font-weight:normal;font-family:&quot;Liberation Sans&quot;,sans-serif;left:630.2px;"><u style="text-decoration-thickness:1px;text-underline-offset:2px">R</u>etorna</div>
<div class="b" style="left:1070px;top:895px;width:111px;height:40.5px;border:1.5px solid #e02020;"></div>
<div class="b" style="left:1071.5px;top:899px;width:108.0px;height:34.5px;background:#f0f0f0;box-shadow:inset 1px 1px 0 #fff, inset -1px -1px 0 #6a6a6a, inset -2px -2px 0 #a0a0a0;"></div>
<svg style="left:1077px;top:905px" width="26" height="22" viewBox="0 0 26 22"><path d="M1 12 L5 9.5 L9.5 15 C13 8 18 3 24.5 0.5 C18 5 13 12 9.5 21 Z" fill="#000" transform="translate(0.3,0.8)"/><path d="M1 12 L5 9.5 L9.5 15 C13 8 18 3 24.5 0.5 C18 5 13 12 9.5 21 Z" fill="#ee0000"/></svg>
<div class="t" style="top:908.76px;font-size:16px;line-height:18.40px;color:#000;font-weight:normal;font-family:&quot;Liberation Sans&quot;,sans-serif;left:1107px;"><u style="text-decoration-thickness:1px;text-underline-offset:2px">C</u>onfirma</div>
<div class="b" style="left:1192px;top:899px;width:112px;height:34.5px;background:#f0f0f0;box-shadow:inset 1px 1px 0 #fff, inset -1px -1px 0 #6a6a6a, inset -2px -2px 0 #a0a0a0;"></div>
<svg style="left:1207px;top:905px" width="22" height="24" viewBox="0 0 22 24"><path d="M3 3 L19 21 M19 3 L3 21" stroke="#9a0000" stroke-width="5.2" stroke-linecap="round"/></svg>
<div class="t" style="top:908.76px;font-size:16px;line-height:18.40px;color:#000;font-weight:normal;font-family:&quot;Liberation Sans&quot;,sans-serif;left:1236px;">C<u style="text-decoration-thickness:1px;text-underline-offset:2px">a</u>ncela</div>
</body></html>
